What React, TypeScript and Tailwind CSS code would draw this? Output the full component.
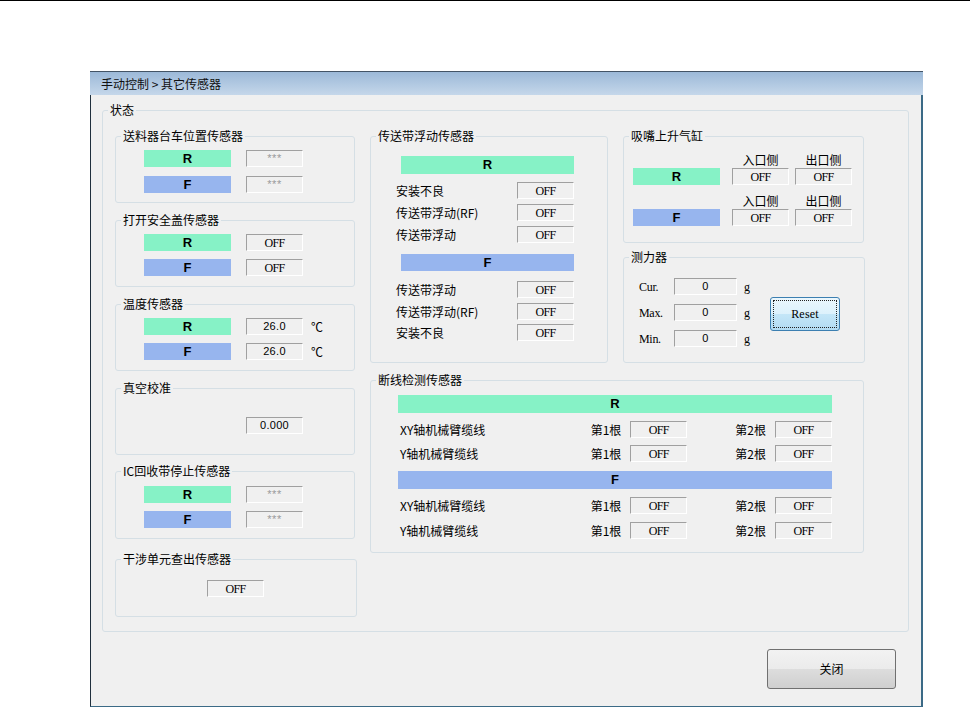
import type { ReactNode } from "react";

const cjk = "font-['Noto_Sans_CJK_SC',sans-serif]";
const mono = "font-['Liberation_Serif',serif]";
const sans = "font-['Liberation_Sans',sans-serif]";

type GroupProps = {
  title: string;
  className?: string;
  children?: ReactNode;
};

const Group = ({ title, className = "", children }: GroupProps) => {
  return (
    <fieldset
      className={`min-w-0 rounded-[3px] border border-[#d5dfe5] ${className}`}
    >
      <legend className="ml-[5px] px-[2px] text-[12px] leading-[16px]">
        {title}
      </legend>
      {children}
    </fieldset>
  );
};

type ValProps = {
  children: ReactNode;
  className?: string;
  dim?: boolean;
  num?: boolean;
};

const Val = ({ children, className = "w-[57px] h-[17px]", dim, num }: ValProps) => {
  return (
    <div
      className={`flex shrink-0 items-center justify-center border border-b-white border-l-[#a0a0a0] border-r-white border-t-[#a0a0a0] bg-[#f0f0f0] ${className} ${
        num
          ? `${sans} text-[11px] tracking-[0.3px]`
          : dim
            ? `${sans} text-[11px] tracking-[0.5px]`
            : `${mono} text-[12px] tracking-[-0.6px]`
      } ${dim ? "text-[#9a9a9a]" : "text-black"}`}
    >
      {children}
    </div>
  );
};

const Bar = ({ side, className = "w-[87px] h-[17px]" }: { side: "R" | "F"; className?: string }) => {
  return (
    <div
      className={`flex shrink-0 items-center justify-center ${sans} text-[13px] font-bold ${
        side === "R" ? "bg-[#86f2c6]" : "bg-[#97b5ee]"
      } ${className}`}
    >
      {side}
    </div>
  );
};

const PairRow = ({ side, value, dim, num, unit }: { side: "R" | "F"; value: string; dim?: boolean; num?: boolean; unit?: string }) => {
  return (
    <div className="flex items-center pl-[28px]">
      <Bar side={side} />
      <Val dim={dim} num={num} className="ml-[15px] w-[57px] h-[17px]">
        {value}
      </Val>
      {unit && <span className="ml-[8px] text-[12px] leading-[16px]">{unit}</span>}
    </div>
  );
};

const BeltRow = ({ label, className = "" }: { label: string; className?: string }) => {
  return (
    <div className={`ml-[25px] flex h-[17px] w-[178px] items-center justify-between ${className}`}>
      <span className="text-[12px] leading-[16px]">{label}</span>
      <Val>OFF</Val>
    </div>
  );
};

const CableRow = ({ label, className = "" }: { label: string; className?: string }) => {
  return (
    <div className={`ml-[29px] flex h-[17px] w-[432px] items-center ${className}`}>
      <span className="flex-1 text-[12px] leading-[16px]">{label}</span>
      <span className="text-[12px] leading-[16px]">第1根</span>
      <Val className="ml-[9px] w-[57px] h-[17px]">OFF</Val>
      <span className="ml-[48px] text-[12px] leading-[16px]">第2根</span>
      <Val className="ml-[9px] w-[57px] h-[17px]">OFF</Val>
    </div>
  );
};

const CylRow = ({ children }: { children: ReactNode }) => {
  return <div className="flex h-[17px] items-center pl-[9px]">{children}</div>;
};

const CylHeader = ({ className = "" }: { className?: string }) => {
  return (
    <div className={`flex h-[16px] items-center pl-[9px] text-[12px] leading-[16px] ${className}`}>
      <div className="w-[87px]" />
      <div className="ml-[12px] w-[57px] text-center">入口侧</div>
      <div className="ml-[6px] w-[57px] text-center">出口侧</div>
    </div>
  );
};

const ForceRow = ({ label, className = "" }: { label: string; className?: string }) => {
  return (
    <div className={`flex h-[17px] items-center pl-[15px] ${className}`}>
      <span className={`w-[35px] ${mono} text-[12px] tracking-[-0.3px]`}>{label}</span>
      <Val num className="w-[63px] h-[17px]">0</Val>
      <span className={`ml-[7px] ${mono} text-[12px]`}>g</span>
    </div>
  );
};

export default function App() {
  return (
    <div className={`h-[707px] w-[970px] overflow-hidden bg-white text-black ${cjk}`}>
      <div className="h-px bg-black" />
      <div className="ml-[90px] mt-[70px] flex h-[636px] w-[833px] flex-col">
        <div className="flex h-[24px] items-center border-t border-[#435466] bg-gradient-to-b from-[#9cb9d8] to-[#c5d7ea] pl-[11px] text-[12px] text-[#111]">
          手动控制 &gt; 其它传感器
        </div>
        <div className="flex flex-1 flex-col border-b border-l border-r-2 border-b-[#3b6a86] border-l-[#1f2f3d] border-r-[#3b6a86] bg-[#f0f0f0]">
          <Group title="状态" className="ml-[11px] mt-[7px] h-[530px] w-[807px]">
            <div className="ml-[12px] mt-[10px] flex">
              {/* left column */}
              <div className="flex w-[242px] flex-col">
                <Group title="送料器台车位置传感器" className="h-[75px] w-[240px]">
                  <div className="pt-[6px]">
                    <PairRow side="R" value="***" dim />
                    <div className="mt-[9px]">
                      <PairRow side="F" value="***" dim />
                    </div>
                  </div>
                </Group>
                <Group title="打开安全盖传感器" className="mt-[9px] h-[75px] w-[240px]">
                  <div className="pt-[6px]">
                    <PairRow side="R" value="OFF" />
                    <div className="mt-[8px]">
                      <PairRow side="F" value="OFF" />
                    </div>
                  </div>
                </Group>
                <Group title="温度传感器" className="mt-[9px] h-[75px] w-[240px]">
                  <div className="pt-[6px]">
                    <PairRow side="R" value="26.0" num unit="℃" />
                    <div className="mt-[8px]">
                      <PairRow side="F" value="26.0" num unit="℃" />
                    </div>
                  </div>
                </Group>
                <Group title="真空校准" className="mt-[9px] h-[75px] w-[240px]">
                  <div className="pl-[130px] pt-[21px]">
                    <Val num>0.000</Val>
                  </div>
                </Group>
                <Group title="IC回收带停止传感器" className="mt-[8px] h-[76px] w-[240px]">
                  <div className="pt-[7px]">
                    <PairRow side="R" value="***" dim />
                    <div className="mt-[8px]">
                      <PairRow side="F" value="***" dim />
                    </div>
                  </div>
                </Group>
                <Group title="干涉单元查出传感器" className="mt-[12px] h-[66px] w-[242px]">
                  <div className="pl-[91px] pt-[13px]">
                    <Val>OFF</Val>
                  </div>
                </Group>
              </div>

              {/* right area */}
              <div className="ml-[13px] flex flex-col">
                <div className="flex">
                  <Group title="传送带浮动传感器" className="h-[235px] w-[238px]">
                    <Bar side="R" className="ml-[30px] mt-[12px] h-[18px] w-[173px]" />
                    <BeltRow label="安装不良" className="mt-[8px]" />
                    <BeltRow label="传送带浮动(RF)" className="mt-[5px]" />
                    <BeltRow label="传送带浮动" className="mt-[5px]" />
                    <Bar side="F" className="ml-[30px] mt-[11px] h-[17px] w-[173px]" />
                    <BeltRow label="传送带浮动" className="mt-[10px]" />
                    <BeltRow label="传送带浮动(RF)" className="mt-[5px]" />
                    <BeltRow label="安装不良" className="mt-[4px]" />
                  </Group>

                  <div className="ml-[15px] flex w-[242px] flex-col">
                    <Group title="吸嘴上升气缸" className="h-[115px] w-[241px]">
                      <CylHeader className="mt-[8px]" />
                      <CylRow>
                        <Bar side="R" />
                        <Val className="ml-[12px] w-[57px] h-[17px]">OFF</Val>
                        <Val className="ml-[6px] w-[57px] h-[17px]">OFF</Val>
                      </CylRow>
                      <CylHeader className="mt-[8px]" />
                      <CylRow>
                        <Bar side="F" />
                        <Val className="ml-[12px] w-[57px] h-[17px]">OFF</Val>
                        <Val className="ml-[6px] w-[57px] h-[17px]">OFF</Val>
                      </CylRow>
                    </Group>
                    <Group title="测力器" className="mt-[6px] h-[114px] w-[242px]">
                      <div className="flex items-start">
                        <div className="w-[146px] pt-[13px]">
                          <ForceRow label="Cur." />
                          <ForceRow label="Max." className="mt-[9px]" />
                          <ForceRow label="Min." className="mt-[9px]" />
                        </div>
                        <button className="mt-[32px] flex h-[34px] w-[70px] rounded-[3px] border border-[#3c7fb1] bg-[linear-gradient(to_bottom,#ebf7fd_0%,#dcf1fc_50%,#c4e6f8_50%,#b2dbf2_100%)] p-[2px]">
                          <span className={`flex flex-1 items-center justify-center border border-dotted border-[#222] ${mono} text-[12px] tracking-[0.2px]`}>
                            Reset
                          </span>
                        </button>
                      </div>
                    </Group>
                  </div>
                </div>

                <Group title="断线检测传感器" className="mt-[9px] h-[181px] w-[494px]">
                  <Bar side="R" className="ml-[27px] mt-[7px] h-[18px] w-[434px]" />
                  <CableRow label="XY轴机械臂缆线" className="mt-[8px]" />
                  <CableRow label="Y轴机械臂缆线" className="mt-[7px]" />
                  <Bar side="F" className="ml-[27px] mt-[9px] h-[18px] w-[434px]" />
                  <CableRow label="XY轴机械臂缆线" className="mt-[8px]" />
                  <CableRow label="Y轴机械臂缆线" className="mt-[8px]" />
                </Group>
              </div>
            </div>
          </Group>

          <div className="mr-[25px] mt-[17px] flex justify-end">
            <button className="flex h-[40px] w-[129px] items-center justify-center rounded-[3px] border border-[#707070] bg-[linear-gradient(to_bottom,#f2f2f2_0%,#ebebeb_50%,#dddddd_50%,#cfcfcf_100%)] text-[12px]">
              关闭
            </button>
          </div>
        </div>
      </div>
    </div>
  );
}
